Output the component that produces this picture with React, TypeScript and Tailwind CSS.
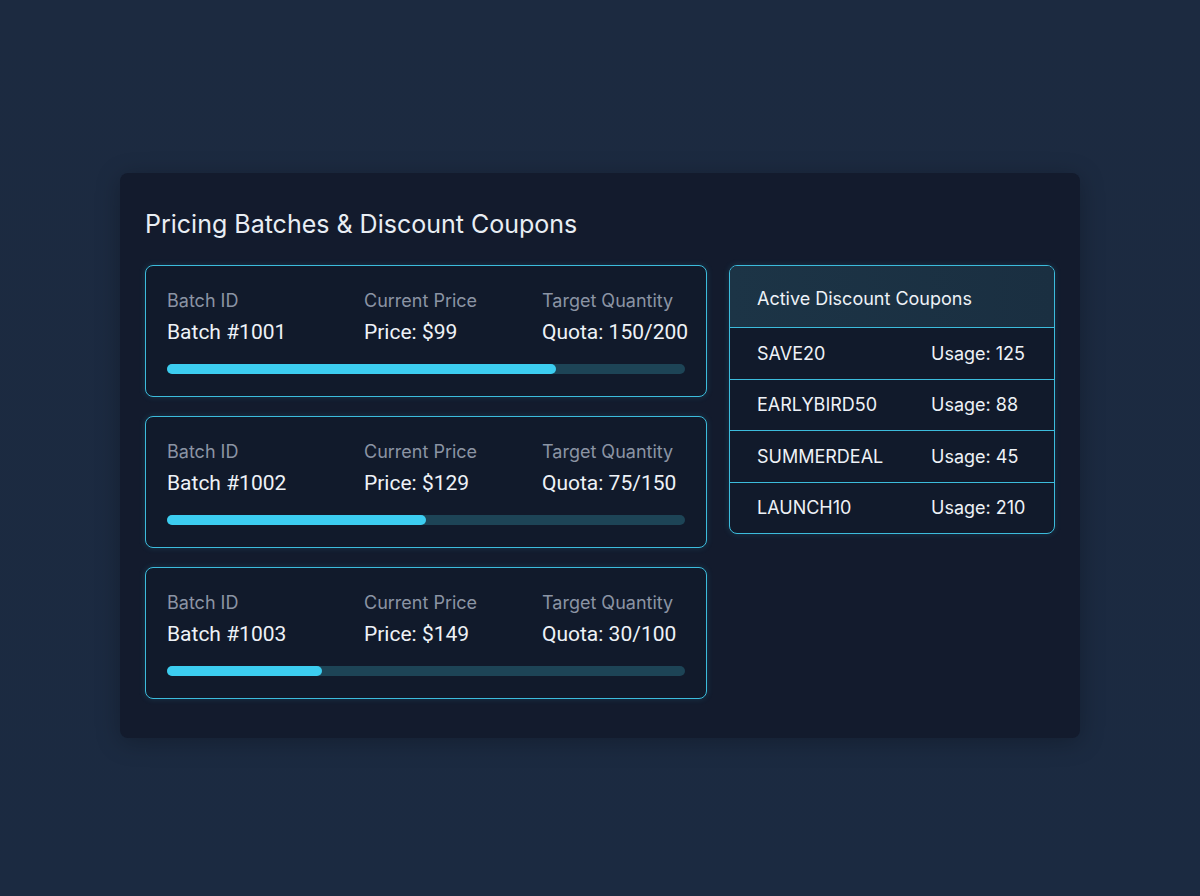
import React from 'react';

interface Batch {
  id: string;
  price: string;
  sold: number;
  target: number;
}

interface Coupon {
  code: string;
  usage: number;
}

const batches: Batch[] = [
  { id: '1001', price: '$99', sold: 150, target: 200 },
  { id: '1002', price: '$129', sold: 75, target: 150 },
  { id: '1003', price: '$149', sold: 30, target: 100 },
];

const coupons: Coupon[] = [
  { code: 'SAVE20', usage: 125 },
  { code: 'EARLYBIRD50', usage: 88 },
  { code: 'SUMMERDEAL', usage: 45 },
  { code: 'LAUNCH10', usage: 210 },
];

// values use a narrower face so the figures sit tighter than the labels
const valueFont = { fontFamily: 'Roboto, Inter, sans-serif' };

function BatchCard({ batch }: { batch: Batch }) {
  const pct = (batch.sold / batch.target) * 100;

  return (
    <div className="rounded-lg border border-[#3cbcdc] bg-[#111a2b] px-[21px] pt-[23px] pb-[22px] shadow-[0_0_6px_rgba(58,185,217,0.18)]">
      <div className="grid grid-cols-[197px_178px_1fr]">
        <div>
          <div className="text-[18px] leading-6 text-[#8b94a4]">Batch ID</div>
          <div className="mt-1 text-[21px] leading-[30px] text-[#eef2f7]" style={valueFont}>
            Batch #{batch.id}
          </div>
        </div>
        <div>
          <div className="text-[18px] leading-6 text-[#8b94a4]">Current Price</div>
          <div className="mt-1 text-[21px] leading-[30px] text-[#eef2f7]" style={valueFont}>
            Price: {batch.price}
          </div>
        </div>
        <div>
          <div className="text-[18px] leading-6 text-[#8b94a4]">Target Quantity</div>
          <div className="mt-1 whitespace-nowrap text-[21px] leading-[30px] text-[#eef2f7]" style={valueFont}>
            Quota: {batch.sold}/{batch.target}
          </div>
        </div>
      </div>
      <div className="mt-[17px] h-[10px] w-full rounded-full bg-[#1d4456]">
        <div className="h-full rounded-full bg-[#3ccdf0]" style={{ width: `${pct}%` }} />
      </div>
    </div>
  );
}

function CouponTable() {
  return (
    <div className="overflow-hidden rounded-lg border border-[#3cbcdc] bg-[#111a2b] shadow-[0_0_6px_rgba(58,185,217,0.18)]">
      <div className="flex h-[61px] items-center bg-gradient-to-r from-[#1c3446] to-[#1a2f41] pl-[27px] pt-1 text-[18px] text-[#eef2f7]">
        Active Discount Coupons
      </div>
      {coupons.map((c) => (
        <div
          key={c.code}
          className="grid h-[51.5px] grid-cols-[174px_1fr] items-center border-t border-[#3cbcdc] pl-[27px] text-[18px] text-[#eef2f7]"
        >
          <span>{c.code}</span>
          <span>Usage: {c.usage}</span>
        </div>
      ))}
    </div>
  );
}

export default function App() {
  return (
    <div
      className="flex h-[896px] w-full items-start justify-center bg-gradient-to-b from-[#1c2a40] to-[#1b2a41] pt-[173px]"
      style={{ fontFamily: 'Inter, "Noto Sans", sans-serif' }}
    >
      <div className="w-[960px] rounded-lg bg-[#131b2d] px-[25px] pt-[35px] pb-[39px] shadow-[0_4px_24px_rgba(0,0,0,0.25)]">
        <h1 className="text-[25px] leading-8 font-normal text-[#e9eef4]">
          Pricing Batches &amp; Discount Coupons
        </h1>
        <div className="mt-[25px] grid grid-cols-[562px_326px] items-start gap-[22px]">
          <div className="flex flex-col gap-[19px]">
            {batches.map((b) => (
              <BatchCard key={b.id} batch={b} />
            ))}
          </div>
          <CouponTable />
        </div>
      </div>
    </div>
  );
}
